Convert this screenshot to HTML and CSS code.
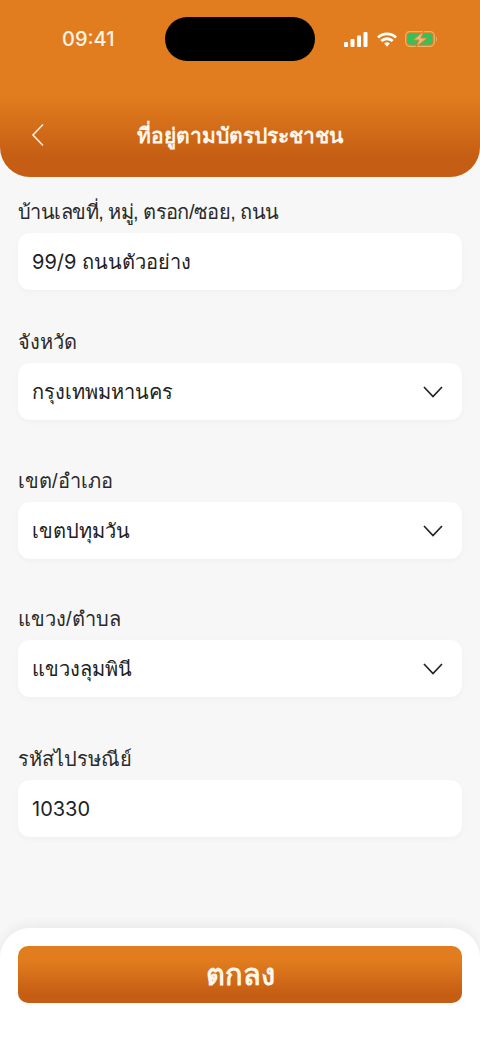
FILE: index.html
```html
<!DOCTYPE html>
<html lang="th">
<head>
<meta charset="utf-8">
<title>ที่อยู่ตามบัตรประชาชน</title>
<link rel="stylesheet" href="styles.css">
</head>
<body>
<div class="page">
  <header class="header">
    <div class="status">
      <span class="time">09:41</span>
      <div class="island"></div>
      <div class="status-icons">
        <svg width="24" height="15" viewBox="0 0 24 15"><g fill="#fff"><rect x="0" y="10" width="4" height="5" rx="1"/><rect x="6.500" y="7" width="4" height="8" rx="1"/><rect x="13" y="3.500" width="4" height="11.500" rx="1"/><rect x="19.500" y="0" width="4" height="15" rx="1"/></g></svg>
        <svg class="wifi" width="20" height="15" viewBox="0 0 20 15"><g fill="none" stroke="#fff" stroke-width="2.800"><path d="M1 5.400a13 13 0 0 1 18 0"/><path d="M4.300 9a8.300 8.300 0 0 1 11.400 0"/></g><path d="M7.200 11.600a4 4 0 0 1 5.600 0L10 14.800z" fill="#fff"/></svg>
        <svg width="33" height="16" viewBox="0 0 33 16"><rect x="0.700" y="0.700" width="28.600" height="14.600" rx="4.200" fill="none" stroke="#eeb26f" stroke-width="1.300"/><rect x="2.600" y="2.600" width="24.800" height="10.800" rx="2.600" fill="#2fc35c"/><path d="M31 5.500c1.200.4 1.200 4.600 0 5z" fill="#eeb26f"/><path d="M19 0 8 9h6l-3 7L22.500 7H16z" fill="#eeb67c" stroke="#e17d1e" stroke-width=".9"/></svg>
      </div>
    </div>
    <div class="nav">
      <svg class="back" width="14" height="24" viewBox="0 0 14 24"><path d="M12 1.500 2 12l10 10.500" fill="none" stroke="#fbe9d6" stroke-width="1.700"/></svg>
      <h1 class="title">ที่อยู่ตามบัตรประชาชน</h1>
    </div>
  </header>

  <main class="form">
    <div class="field f1">
      <div class="label tight">บ้านเลขที่, หมู่, ตรอก/ซอย, ถนน</div>
      <div class="box">99/9 ถนนตัวอย่าง</div>
    </div>
    <div class="field f2">
      <div class="label">จังหวัด</div>
      <div class="box">กรุงเทพมหานคร
        <svg class="chev" width="20" height="12" viewBox="0 0 20 12"><path d="M1 1l9 9.500L19 1" fill="none" stroke="#222" stroke-width="1.700"/></svg>
      </div>
    </div>
    <div class="field f3">
      <div class="label">เขต/อำเภอ</div>
      <div class="box">เขตปทุมวัน
        <svg class="chev" width="20" height="12" viewBox="0 0 20 12"><path d="M1 1l9 9.500L19 1" fill="none" stroke="#222" stroke-width="1.700"/></svg>
      </div>
    </div>
    <div class="field f4">
      <div class="label">แขวง/ตำบล</div>
      <div class="box">แขวงลุมพินี
        <svg class="chev" width="20" height="12" viewBox="0 0 20 12"><path d="M1 1l9 9.500L19 1" fill="none" stroke="#222" stroke-width="1.700"/></svg>
      </div>
    </div>
    <div class="field f5">
      <div class="label">รหัสไปรษณีย์</div>
      <div class="box">10330</div>
    </div>
  </main>

  <footer class="footer">
    <button class="ok">ตกลง</button>
  </footer>
</div>
</body>
</html>
```
FILE: styles.css
```css
* { box-sizing: border-box; }
html, body { margin: 0; padding: 0; }
body {
  width: 480px;
  height: 1044px;
  overflow: hidden;
  background: #f7f7f7;
  font-family: "Liberation Sans", "Noto Sans", sans-serif;
  color: #222;
}
.page { display: flex; flex-direction: column; height: 1044px; }
.header {
  height: 177px;
  flex: none;
  border-radius: 0 0 30px 30px;
  background: linear-gradient(180deg, #e17d1e 0, #e17d1e 96px, #c55d14 158px, #c55d14 100%);
  color: #fff;
}
.status {
  height: 106px;
  padding: 17px 0 0 62px;
  display: flex;
  align-items: flex-start;
}
.time { font-family: Inter, sans-serif; font-size: 20px; font-weight: 500; line-height: 44px; color: #fdf3e6; width: 103px; flex: none; }
.island { width: 150px; height: 44px; border-radius: 22px; background: #000; flex: none; }
.status-icons { margin-left: 29px; height: 44px; display: flex; align-items: center; gap: 8px; }
.wifi { margin-left: 1px; }
.nav { position: relative; height: 60px; display: flex; align-items: center; justify-content: center; }
.back { position: absolute; left: 31px; top: 17px; }
.title { margin: 0; font-size: 21px; font-weight: 700; line-height: 60px; color: #fdf6ee; }
.form { padding: 0 18px; flex: 1; }
.f1 { margin-top: 20px; }
.f2 { margin-top: 37px; }
.f3 { margin-top: 46px; }
.f4 { margin-top: 45px; }
.f5 { margin-top: 47px; }
.label { font-size: 20px; line-height: 30px; height: 36px; color: #2a2a2a; }
.tight { letter-spacing: -.55px; }
.box {
  height: 57px;
  border-radius: 12px;
  background: #fff;
  box-shadow: 0 2px 6px rgba(0,0,0,.03);
  padding: 1px 19px 0 14px;
  display: flex;
  align-items: center;
  justify-content: space-between;
  font-family: Inter, "Noto Sans", sans-serif;
  font-size: 20px;
  color: #222;
}
.chev { flex: none; }
.footer {
  height: 116px;
  flex: none;
  background: #fff;
  border-radius: 30px 30px 0 0;
  box-shadow: 0 -3px 12px rgba(0,0,0,.06);
  padding: 18px 18px 0;
}
.ok {
  display: block;
  width: 100%;
  height: 57px;
  border: 0;
  border-radius: 10px;
  background: linear-gradient(180deg, #e17d1e 0, #e17d1e 25%, #c55d14 85%, #c55d14 100%);
  color: #fff6ea;
  font: 700 29px "Liberation Sans", "Noto Sans", sans-serif;
}
```
